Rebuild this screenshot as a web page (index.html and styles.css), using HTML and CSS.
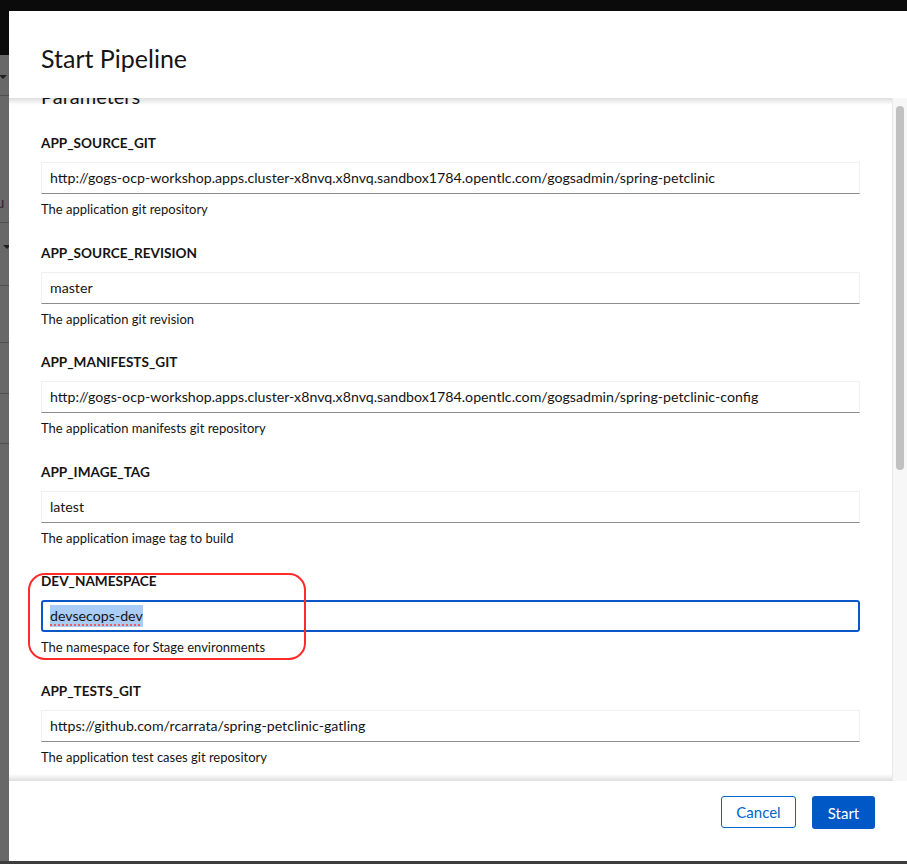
FILE: index.html
```html
<!DOCTYPE html>
<html lang="en">
<head>
<meta charset="utf-8">
<title>Start Pipeline</title>
<link rel="stylesheet" href="styles.css">
</head>
<body>
<div class="screen">
  <div class="topbar"></div>
  <div class="main">
    <div class="bgstrip">
      <div class="seg seg-black"></div>
      <div class="seg seg-a"><span class="caret"></span></div>
      <div class="seg seg-b"><span class="glyph">u</span></div>
      <div class="seg seg-c"><span class="caret"></span></div>
      <div class="seg seg-d"></div>
      <div class="seg seg-e"></div>
      <div class="seg seg-f"></div>
      <div class="seg seg-rest"></div>
    </div>
    <div class="modal">
      <header class="modal-header">
        <h1 class="modal-title">Start Pipeline</h1>
      </header>
      <div class="modal-body">
        <div class="scroll-area">
          <div class="content">
            <h2 class="section-title">Parameters</h2>

            <div class="field">
              <div class="label">APP_SOURCE_GIT</div>
              <div class="input">http://gogs-ocp-workshop.apps.cluster-x8nvq.x8nvq.sandbox1784.opentlc.com/gogsadmin/spring-petclinic</div>
              <div class="helper">The application git repository</div>
            </div>

            <div class="field">
              <div class="label">APP_SOURCE_REVISION</div>
              <div class="input">master</div>
              <div class="helper">The application git revision</div>
            </div>

            <div class="field">
              <div class="label">APP_MANIFESTS_GIT</div>
              <div class="input">http://gogs-ocp-workshop.apps.cluster-x8nvq.x8nvq.sandbox1784.opentlc.com/gogsadmin/spring-petclinic-config</div>
              <div class="helper">The application manifests git repository</div>
            </div>

            <div class="field">
              <div class="label">APP_IMAGE_TAG</div>
              <div class="input">latest</div>
              <div class="helper">The application image tag to build</div>
            </div>

            <div class="field field-annotated">
              <div class="label">DEV_NAMESPACE</div>
              <div class="input input-focused"><span class="selected">devsecops-dev</span></div>
              <div class="helper">The namespace for Stage environments</div>
              <div class="annotation"></div>
            </div>

            <div class="field">
              <div class="label">APP_TESTS_GIT</div>
              <div class="input">https://github.com/rcarrata/spring-petclinic-gatling</div>
              <div class="helper">The application test cases git repository</div>
            </div>

            <div class="field">
              <div class="label">STAGE_NAMESPACE</div>
              <div class="input">devsecops-stage</div>
              <div class="helper">The namespace for Stage environments</div>
            </div>
          </div>
        </div>
        <div class="scrollbar"><div class="thumb"></div></div>
      </div>
      <footer class="modal-footer">
        <button class="btn btn-secondary" type="button">Cancel</button>
        <button class="btn btn-primary" type="button">Start</button>
      </footer>
    </div>
  </div>
  <div class="bottombar"></div>
</div>
</body>
</html>
```

FILE: styles.css
```css
* { box-sizing: border-box; }

html, body {
  margin: 0;
  padding: 0;
  background: #0b0b0b;
}

body {
  font-family: "Lato", "Open Sans", sans-serif;
  color: #151515;
}

.screen {
  width: 907px;
  height: 864px;
  display: grid;
  grid-template-rows: 11px 1fr 3px;
  overflow: hidden;
}

.topbar { background: #0b0b0b; }
.bottombar { background: #3d3d3d; }

.main {
  display: grid;
  grid-template-columns: 9px 1fr;
  min-height: 0;
}

/* page behind the backdrop */
.bgstrip {
  display: flex;
  flex-direction: column;
  background: #686868;
  overflow: hidden;
}
.seg {
  position: relative;
  border-bottom: 1px solid #4e4e4e;
  flex: none;
}
.seg-black { height: 44px; background: #0b0b0b; border-bottom: 0; }
.seg-a { height: 41px; }
.seg-b { height: 127px; }
.seg-c { height: 63px; }
.seg-d { height: 57px; }
.seg-e { height: 51px; }
.seg-f { height: 50px; }
.seg-rest { flex: 1; border-bottom: 0; }

.caret {
  position: absolute;
  left: 0;
  width: 0;
  height: 0;
  border-left: 4px solid transparent;
  border-right: 4px solid transparent;
  border-top: 4px solid #1f1f1f;
}
.seg-a .caret { top: 20px; left: -1px; }
.seg-c .caret { top: 22px; left: 3px; }
.glyph {
  position: absolute;
  top: 97px;
  left: -4px;
  font-size: 15px;
  line-height: 18px;
  color: #2b2b2b;
}

/* modal */
.modal {
  background: #fff;
  display: flex;
  flex-direction: column;
  min-height: 0;
}

.modal-header {
  height: 87px;
  flex: none;
  padding: 6px 32px 0;
  display: flex;
  align-items: center;
}

.modal-title {
  margin: 0;
  font-family: "Lato", "Open Sans", sans-serif;
  font-weight: 400;
  font-size: 25px;
  line-height: 30px;
  color: #151515;
}

.modal-body {
  flex: 1;
  min-height: 0;
  display: flex;
}

.scroll-area {
  flex: 1;
  position: relative;
  overflow: hidden;
}
.scroll-area::before,
.scroll-area::after {
  content: "";
  position: absolute;
  left: 0;
  right: 0;
  height: 7px;
  z-index: 2;
}
.scroll-area::before {
  top: 0;
  background: linear-gradient(to bottom, rgba(0,0,0,0.13), rgba(0,0,0,0));
}
.scroll-area::after {
  bottom: 0;
  background: linear-gradient(to top, rgba(0,0,0,0.13), rgba(0,0,0,0));
}

.content {
  padding: 0 32px;
  margin-top: -14px;
}

.section-title {
  margin: 0 0 26px;
  font-weight: 400;
  font-size: 20px;
  line-height: 24px;
}

.field {
  position: relative;
  margin-bottom: 25.5px;
}

.label {
  font-size: 13.6px;
  line-height: 18px;
  font-weight: 700;
  margin-bottom: 10px;
}

.input {
  height: 32px;
  border: 1px solid #f0f0f0;
  border-bottom-color: #8a8d90;
  padding: 0 8px;
  font-size: 14.2px;
  line-height: 30px;
  white-space: nowrap;
  overflow: hidden;
}

.input-focused {
  border: 2px solid #0b57c7;
  border-radius: 3px;
  padding: 0 7px;
  line-height: 28px;
}

.selected {
  background: #a9cdf6;
  padding: 2px 0 3px;
  text-decoration-line: underline;
  text-decoration-style: dotted;
  text-decoration-color: #ef5a60;
  text-decoration-thickness: 2px;
  text-underline-offset: 3px;
}

.helper {
  margin-top: 6px;
  font-size: 13px;
  line-height: 18px;
}

.annotation {
  position: absolute;
  left: -13px;
  top: 1px;
  width: 278px;
  height: 87px;
  border: 2px solid #ff2a2a;
  border-radius: 17px;
  pointer-events: none;
}

.scrollbar {
  width: 15px;
  flex: none;
  background: #f7f7f7;
  border-left: 1px solid #e9e9e9;
  padding: 8px 2px 0 3px;
}
.thumb {
  width: 8px;
  height: 364px;
  border-radius: 4px;
  background: #c1c1c1;
}

.modal-footer {
  height: 80px;
  flex: none;
  display: flex;
  justify-content: flex-end;
  align-items: flex-start;
  gap: 16px;
  padding: 15px 32px 0;
}

.btn {
  font-family: "Lato", "Open Sans", sans-serif;
  font-size: 15px;
  border-radius: 3px;
  cursor: pointer;
  padding: 0;
}
.btn-secondary {
  width: 75px;
  height: 32px;
  background: #fff;
  color: #0066cc;
  border: 1px solid #0066cc;
}
.btn-primary {
  width: 63px;
  height: 33px;
  background: #0058c6;
  color: #fff;
  border: 0;
}
```
